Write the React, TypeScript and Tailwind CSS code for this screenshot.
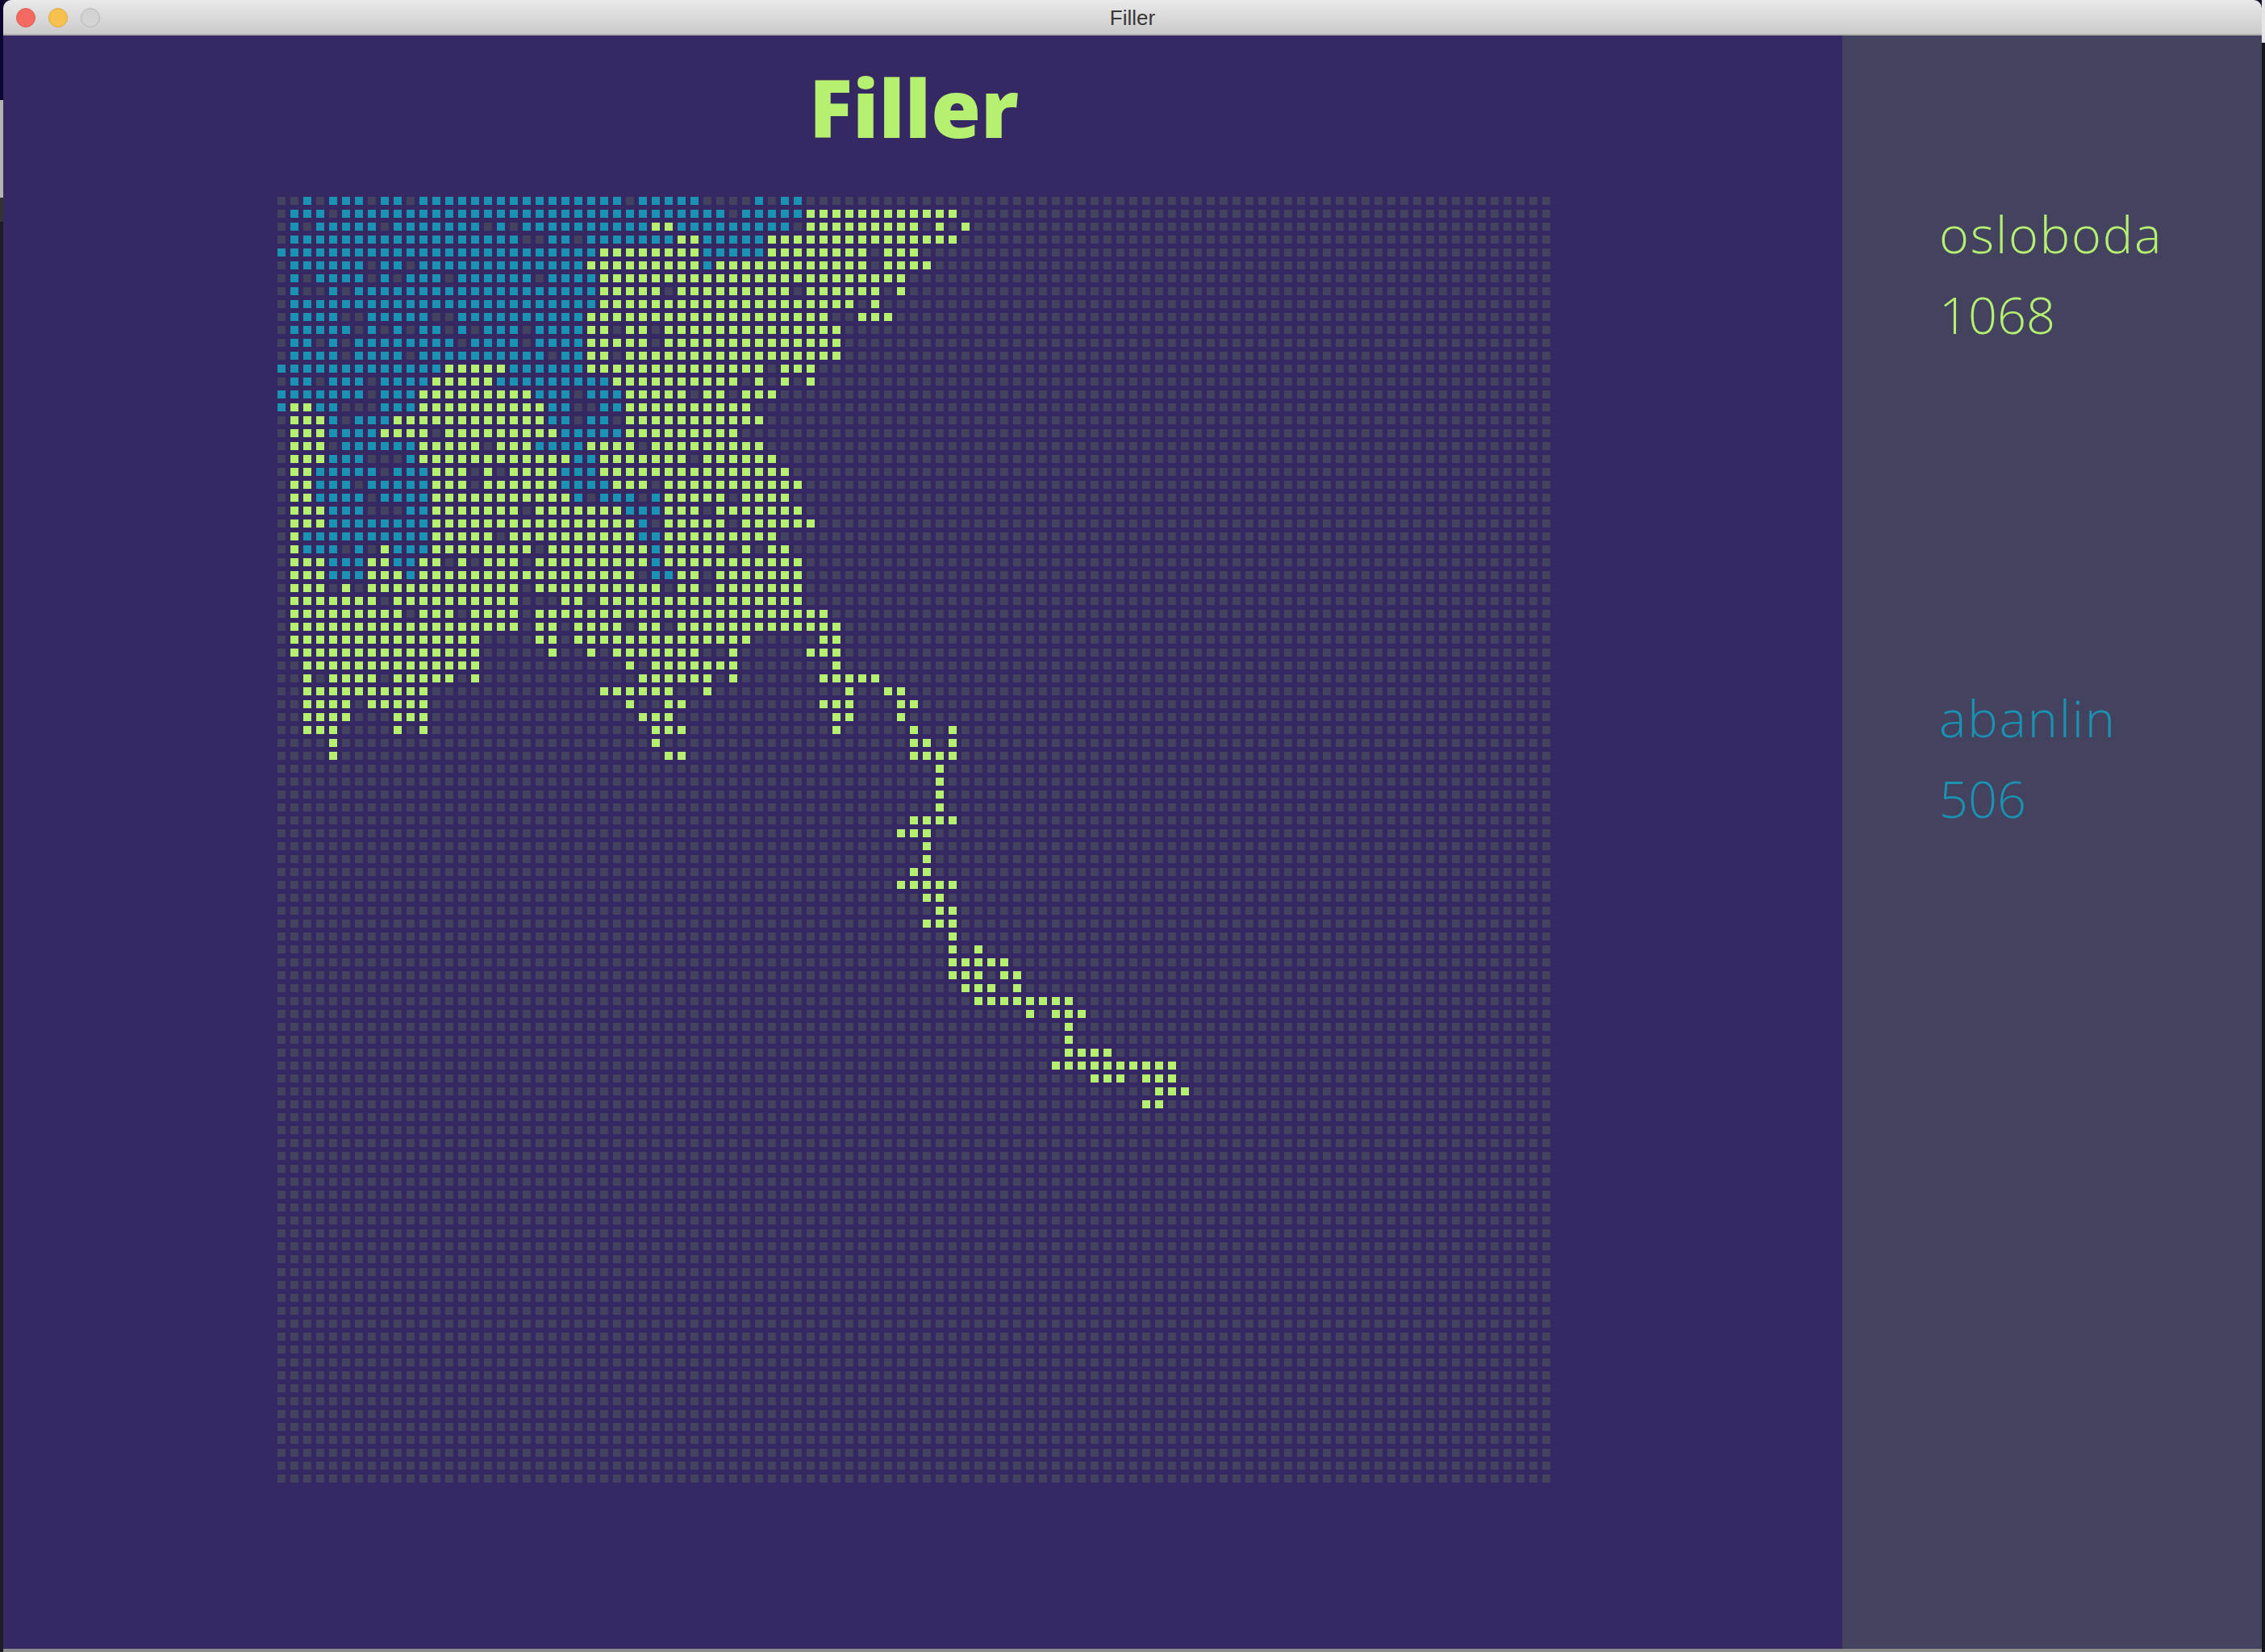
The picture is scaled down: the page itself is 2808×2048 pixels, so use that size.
import React from 'react';

const COLS = 99;
const ROWS = 100;

// runs per row, e.g. "b2 g4-6": blue cell at col 2, green cells at cols 4 to 6. Anything not listed is empty.
const BOARD = [
  'b2 b4-6 b8-9 b11-26 b28-32 b37 b39-40',
  'b1-3 b5-34 b36-40 g41-52',
  'b1 b3-7 b9-15 b17 b19-28 g29-30 b31-39 g41-49 g51 g53',
  'b1-18 b21-22 b24-30 g31-32 b33-37 g38-52',
  'b0-24 g25-32 b33-37 g38-45 g47-49',
  'b1-6 b8-9 b11-23 g24-32 b33 g34-45 g47-50',
  'b1 b3-6 b8 b10-12 b14-19 b21-24 g25-48',
  'b1 b4 b6-24 g25-29 g31-39 g41-46 g48',
  'b1-24 g25-44 g46',
  'b1-4 b7-11 b14-23 g24-42 g45-47',
  'b1-5 b7 b9 b11-12 b14 b16-18 b20-23 g24-25 g27-28 g30-43',
  'b1-2 b4 b6-13 b15-18 b20-23 g24-28 g30-43',
  'b1-4 b6-9 b11-20 b22-23 g24-25 g27-43',
  'b0-12 g13-17 b18-23 g24-37 g39-41',
  'b1-2 b4-6 b8-11 g12-16 b17-25 g26-35 g37 g39 g41',
  'b0-6 b8-10 g11-19 b20-22 b24-26 g27-31 g33-34 g36-38',
  'b0 g1-2 b3-4 b8-10 g11-20 b21-22 b25-26 g27-36',
  'g1-3 b4 b6-8 g9-20 b21-22 b24-25 g27-37',
  'g1-3 b4-7 g8-11 g13-21 b22-26 g27-35',
  'g1-3 b5-10 g11-15 g17-19 b20-23 g24-27 g29-37',
  'g1-3 b4-6 b10 g11-22 b23-24 g25-31 g33-38',
  'g1-2 b3-7 b9-11 g12-14 g16 g18-21 b22-24 g25-39',
  'g1-2 b3-5 b7-11 g12-14 g16-21 b22-25 g26-28 g30-40',
  'g1-2 b3-6 b8-11 g12-22 b23 b25-27 b29 g30-34 g36-39',
  'g1-3 b4-6 b10-11 g12-18 g20-26 b27-29 g30-32 g34-40',
  'g1-3 b4-11 g12-27 b28 g30-34 g36-41',
  'g1 b2-11 g12-16 g18-27 b28-29 g30-38',
  'g1 b2-4 b6 g8 b9-11 g12-19 g21-28 b29 g30-34 g36 g38-39',
  'g1-3 b4-6 g7-8 b9-10 g11-12 g14 g16-18 g20-28 b29 g30-40',
  'g1-3 b4-6 g7-9 b10 g11-27 b29-30 g31-32 g34-40',
  'g1-3 g5 g7-18 g20-29 g31-32 g34-40',
  'g1-7 g9-18 g22-23 g25-40',
  'g1-9 g11-13 g15-18 g20-42',
  'g1-18 g20-21 g23-26 g28-29 g31-43',
  'g1-15 g20-21 g23-36 g42-43',
  'g1-15 g21 g24 g26-32 g35 g41-43',
  'g2-15 g27 g29-35 g43',
  'g2 g4-7 g9-13 g15 g28-33 g35 g42-46',
  'g2-11 g25-30 g33 g44 g47-48',
  'g2-5 g7-11 g27 g30-31 g42-44 g48-49',
  'g2-5 g9-11 g28-30 g43-44 g48',
  'g2-4 g9 g11 g29-31 g43 g49 g52',
  'g4 g29 g49-50 g52',
  'g4 g30-31 g49-52',
  'g51',
  'g51',
  'g51',
  'g51',
  'g49-52',
  'g48-50',
  'g50',
  'g50',
  'g49-50',
  'g48-52',
  'g50-51',
  'g51-52',
  'g50-52',
  'g52',
  'g52 g54',
  'g52-56',
  'g52-54 g56-57',
  'g53-55 g57',
  'g54-61',
  'g58 g60-62',
  'g61',
  'g61',
  'g61-64',
  'g60-69',
  'g63-65 g67-69',
  'g68-70',
  'g67-68',
];

function buildCells() {
  const cells: string[] = new Array(COLS * ROWS).fill('');
  BOARD.forEach((row, y) => {
    row.split(' ').forEach((run) => {
      const [from, to] = run.slice(1).split('-').map(Number);
      for (let x = from; x <= (to ?? from); x++) cells[y * COLS + x] = run[0];
    });
  });
  return cells;
}

const cellColor: Record<string, string> = {
  '': 'bg-[#434360]',
  b: 'bg-[#1a93b3]',
  g: 'bg-[#b5f071]',
};

function Player({ name, score, className }: { name: string; score: number; className: string }) {
  return (
    <div className={`h-[600px] text-[63px] leading-[100px] font-light ${className}`}>
      <div className="tracking-[1.8px]">{name}</div>
      <div>{score}</div>
    </div>
  );
}

export default function App() {
  const cells = buildCells();

  return (
    <div className="flex w-[2808px] h-[2048px] overflow-hidden bg-[#14102a] font-['Open_Sans',sans-serif]">
      <div className="flex flex-col w-[4px] shrink-0">
        <div className="h-[124px] bg-[#0b0630]" />
        <div className="h-[121px] bg-[#b4b4b4]" />
        <div className="h-[30px] bg-[#333336]" />
        <div className="flex-1 bg-[#1e1c26]" />
      </div>

      <div className="flex flex-col flex-1 min-w-0">
        <div className="flex flex-col flex-1 min-h-0 rounded-t-[10px] overflow-hidden">
          <div className="grid grid-cols-[1fr_auto_1fr] items-center h-[44px] shrink-0 pt-[2px] border-b-2 border-[#aeaeae] bg-gradient-to-b from-[#e9e9e9] to-[#cbcbcb]">
            <div className="flex items-center gap-[16px] pl-[16px]">
              <span className="w-[24px] h-[24px] rounded-full bg-[#f46a60] border border-[#de5a50]" />
              <span className="w-[24px] h-[24px] rounded-full bg-[#f7c150] border border-[#e0a73c]" />
              <span className="w-[24px] h-[24px] rounded-full bg-[#d3d3d3] border border-[#b6b6b6]" />
            </div>
            <div className="text-[26px] leading-none text-[#383838] font-['Liberation_Sans',sans-serif]">
              Filler
            </div>
            <div />
          </div>

          <div className="flex flex-1 min-h-0">
            <main className="w-[2280px] shrink-0 pl-[340px] bg-[#362862]">
              <div className="w-[1578px]">
                <h1 className="mt-[38px] mb-[62px] text-center text-[100px] leading-none font-extrabold text-[#b5f071]">
                  Filler
                </h1>
                <div className="grid grid-cols-[repeat(99,10px)] gap-[6px]">
                  {cells.map((c, i) => (
                    <div key={i} className={`h-[10px] ${cellColor[c]}`} />
                  ))}
                </div>
              </div>
            </main>

            <aside className="flex-1 pt-[196px] pl-[120px] bg-[#434360]">
              <Player name="osloboda" score={1068} className="text-[#b5f071]" />
              <Player name="abanlin" score={506} className="text-[#1a93b3]" />
            </aside>
          </div>
        </div>
        <div className="h-[4px] shrink-0 bg-[#8c8c8c]" />
      </div>

      <div className="flex flex-col w-[4px] shrink-0">
        <div className="h-[53px] bg-[#e6e6e6]" />
        <div className="flex-1 bg-[#15141a]" />
      </div>
    </div>
  );
}
